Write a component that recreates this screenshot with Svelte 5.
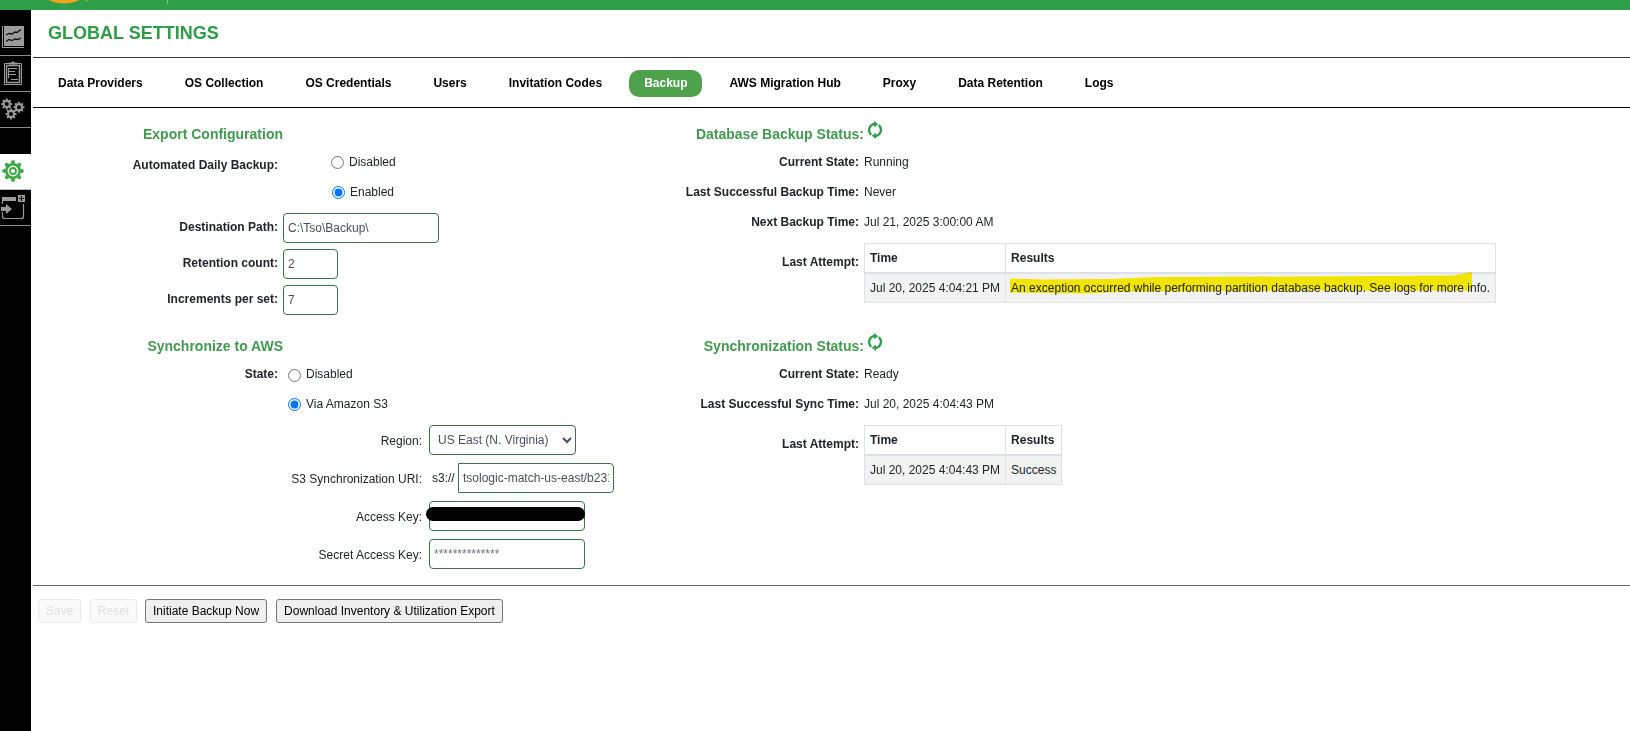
<script lang="ts">
	interface Attempt {
		time: string;
		result: string;
		marked?: boolean;
	}

	interface StatusPanel {
		title: string;
		rows: { label: string; value: string }[];
		attempt: Attempt;
	}

	const tabs: string[] = [
		'Data Providers',
		'OS Collection',
		'OS Credentials',
		'Users',
		'Invitation Codes',
		'Backup',
		'AWS Migration Hub',
		'Proxy',
		'Data Retention',
		'Logs'
	];

	const backupStatus: StatusPanel = {
		title: 'Database Backup Status:',
		rows: [
			{ label: 'Current State:', value: 'Running' },
			{ label: 'Last Successful Backup Time:', value: 'Never' },
			{ label: 'Next Backup Time:', value: 'Jul 21, 2025 3:00:00 AM' }
		],
		attempt: {
			time: 'Jul 20, 2025 4:04:21 PM',
			result:
				'An exception occurred while performing partition database backup. See logs for more info.',
			marked: true
		}
	};

	const syncStatus: StatusPanel = {
		title: 'Synchronization Status:',
		rows: [
			{ label: 'Current State:', value: 'Ready' },
			{ label: 'Last Successful Sync Time:', value: 'Jul 20, 2025 4:04:43 PM' }
		],
		attempt: { time: 'Jul 20, 2025 4:04:43 PM', result: 'Success' }
	};

	let activeTab = $state('Backup');
	let dailyBackup = $state('enabled');
	let syncState = $state('s3');
	let destinationPath = $state('C:\\Tso\\Backup\\');
	let retentionCount = $state('2');
	let incrementsPerSet = $state('7');
	let region = $state('US East (N. Virginia)');
	let syncUri = $state('tsologic-match-us-east/b231');
</script>

<!-- Toothed wheel centred on cx, cy: a ring with evenly rotated teeth -->
{#snippet gear(cx: number, cy: number, r: number, teeth: number, tooth: number, body: number)}
	<g fill="none" stroke="currentColor">
		<circle {cx} {cy} {r} stroke-width={body} />
		{#each Array(teeth) as _, i}
			<path
				d={`M${cx - tooth * 0.8} ${cy - r - body / 2 + 0.4}L${cx - tooth * 0.5} ${cy - r - body / 2 - tooth}H${cx + tooth * 0.5}L${cx + tooth * 0.8} ${cy - r - body / 2 + 0.4}Z`}
				transform={`rotate(${(360 / teeth) * i} ${cx} ${cy})`}
				fill="currentColor"
				stroke="none"
			/>
		{/each}
	</g>
{/snippet}

{#snippet refreshIcon()}
	<svg class="refresh" width="16" height="18" viewBox="0 0 16 18" aria-hidden="true">
		<g fill="none" stroke="#2e9d48" stroke-width="2.3">
			<path d="M4.200 13.800A6.300 6.300 0 0 1 7.500 2.900" />
			<path d="M11.800 4.200A6.300 6.300 0 0 1 8.500 15.100" />
		</g>
		<path d="M7 0L11.300 3.200L7 6.200Z" fill="#2e9d48" />
		<path d="M9 18L4.700 14.800L9 11.800Z" fill="#2e9d48" />
	</svg>
{/snippet}

{#snippet statusPanel(panel: StatusPanel)}
	<section class="panel status">
		<div class="title-row">
			<h2>{panel.title}</h2>
			{@render refreshIcon()}
		</div>
		{#each panel.rows as row}
			<div class="row">
				<span class="label">{row.label}</span>
				<span>{row.value}</span>
			</div>
		{/each}
		<div class="row attempt">
			<span class="label">Last Attempt:</span>
			<table>
				<thead>
					<tr><th>Time</th><th>Results</th></tr>
				</thead>
				<tbody>
					<tr>
						<td>{panel.attempt.time}</td>
						<td class="result">
							{panel.attempt.result}
							{#if panel.attempt.marked}
								<svg class="marker" width="464" height="23" viewBox="0 0 464 23" aria-hidden="true">
									<path
										d="M0 6.5L35 7.5L100 7L145 5L300 4.5L443 3.5L462 0V18.5L300 18.5L120 19.5L74 21.5L0 20.5Z"
										fill="#fef200"
									/>
								</svg>
							{/if}
						</td>
					</tr>
				</tbody>
			</table>
		</div>
	</section>
{/snippet}

<div class="app">
	<header class="topbar">
		<svg width="180" height="10" viewBox="0 0 180 10" aria-hidden="true">
			<ellipse cx="64" cy="-5" rx="19" ry="8.5" fill="#f9a11b" />
			<path d="M85 0h3l-1 1.5z" fill="#c9a52c" />
			<path d="M167.5 0v4" stroke="#7cc48b" />
		</svg>
	</header>

	<div class="body">
		<nav class="sidebar">
			<button class="side first" aria-label="Dashboard">
				<svg width="31" height="44" viewBox="0 0 31 44">
					<path d="M4 16h20v20H4z" fill="#9b9b9b" />
					<path d="M2.5 16v21.500H24" fill="none" stroke="#9b9b9b" />
					<path
						d="M6 25l3-1.500 3 .5 3-2 2 .5 4-3M6 31.500l3-2 3 1 3-1.500 3 .5 3-1.500"
						fill="none"
						stroke="#111"
						stroke-width="1.300"
					/>
				</svg>
			</button>
			<button class="side" aria-label="Reports">
				<svg width="31" height="35" viewBox="0 0 31 35">
					<g fill="none" stroke="#9b9b9b">
						<path d="M4.500 7.500h17v21h-17z" />
						<path d="M6.500 9.500h13v17h-13z" stroke-width="1.500" />
						<path d="M9 12.500h8M9 15.500h6M9 18.500h7M11 23.500h7M8.500 12v10" />
					</g>
					<path d="M9 8.500V6.500h2.500l1.500-1.500 1.500 1.500H17v2z" fill="#9b9b9b" />
				</svg>
			</button>
			<button class="side" aria-label="Services">
				<svg width="31" height="35" viewBox="0 0 31 35" color="#9b9b9b">
					{@render gear(6.7, 12, 3, 8, 1.6, 1.9)}
					{@render gear(19, 15.3, 3, 8, 1.6, 1.9)}
					{@render gear(11, 22, 3, 8, 1.6, 1.9)}
				</svg>
			</button>
			<div class="side-gap"></div>
			<button class="side active" aria-label="Settings">
				<svg width="31" height="35" viewBox="0 0 31 35" color="#3aa845">
					{@render gear(13, 17, 6.7, 8, 2.7, 2.6)}
					<circle cx="13" cy="17" r="3" fill="none" stroke="currentColor" stroke-width="1.800" />
				</svg>
			</button>
			<button class="side" aria-label="Import">
				<svg width="31" height="35" viewBox="0 0 31 35">
					<path d="M2 7h14v4H2zM18 5h7v7h-7z" fill="#9b9b9b" />
					<path d="M21.500 6v5M19 8.500h5" stroke="#111" stroke-width="1.200" />
					<path
						d="M2.500 11v3M2.500 22v4.500q0 2 2 2h17q2 0 2-2V14"
						fill="none"
						stroke="#9b9b9b"
						stroke-width="1.200"
					/>
					<path d="M1 17h5v-3l6 5-6 5v-3H1z" fill="#9b9b9b" />
				</svg>
			</button>
		</nav>

		<main>
			<h1>GLOBAL SETTINGS</h1>

			<div class="tabs" role="tablist">
				{#each tabs as tab}
					<button
						role="tab"
						class="tab"
						class:selected={tab === activeTab}
						aria-selected={tab === activeTab}
						onclick={() => (activeTab = tab)}>{tab}</button
					>
				{/each}
			</div>

			<div class="content">
				<section class="panel">
					<div class="title-row"><h2>Export Configuration</h2></div>
					<div class="row daily">
						<span class="label">Automated Daily Backup:</span>
						<div class="radios">
							<label>
								<input type="radio" value="disabled" bind:group={dailyBackup} />Disabled
							</label>
							<label class="nudge">
								<input type="radio" value="enabled" bind:group={dailyBackup} />Enabled
							</label>
						</div>
					</div>
					<div class="row field">
						<span class="label">Destination Path:</span>
						<input class="box" bind:value={destinationPath} />
					</div>
					<div class="row field">
						<span class="label">Retention count:</span>
						<input class="box short" bind:value={retentionCount} />
					</div>
					<div class="row field">
						<span class="label">Increments per set:</span>
						<input class="box short" bind:value={incrementsPerSet} />
					</div>
				</section>

				{@render statusPanel(backupStatus)}

				<section class="panel">
					<div class="title-row"><h2>Synchronize to AWS</h2></div>
					<div class="row state">
						<span class="label">State:</span>
						<div class="radios">
							<label class="off">
								<input type="radio" value="off" bind:group={syncState} />Disabled
							</label>
							<label>
								<input type="radio" value="s3" bind:group={syncState} />Via Amazon S3
							</label>
						</div>
					</div>
					<div class="s3">
						<div class="s3-row">
							<span class="s3-label">Region:</span>
							<select class="box" bind:value={region}>
								<option>US East (N. Virginia)</option>
							</select>
						</div>
						<div class="s3-row">
							<span class="s3-label">S3 Synchronization URI:</span>
							<span class="scheme">s3://</span>
							<input class="box joined" bind:value={syncUri} />
						</div>
						<div class="s3-row">
							<span class="s3-label">Access Key:</span>
							<div class="covered">
								<input class="box" aria-label="Access Key" />
								<span class="redaction"></span>
							</div>
						</div>
						<div class="s3-row">
							<span class="s3-label">Secret Access Key:</span>
							<input class="box secret" placeholder="**************" />
						</div>
					</div>
				</section>

				{@render statusPanel(syncStatus)}
			</div>

			<footer>
				<button class="action save" disabled>Save</button>
				<button class="action reset" disabled>Reset</button>
				<button class="action">Initiate Backup Now</button>
				<button class="action">Download Inventory &amp; Utilization Export</button>
			</footer>
		</main>
	</div>
</div>

<style>
	:global(body) {
		overflow: hidden;
		background: #fff;
	}

	.app {
		display: flex;
		flex-direction: column;
		height: 731px;
		color: #212529;
		font-family: 'Liberation Sans', Arial, sans-serif;
		font-size: 12px;
		line-height: 18px;
	}

	.app * {
		box-sizing: border-box;
	}

	button,
	input,
	select {
		font: inherit;
	}

	svg {
		display: block;
	}

	.topbar {
		height: 10px;
		background: #2f9e48;
	}

	.body {
		display: flex;
		flex: 1;
		min-height: 0;
	}

	/* Sidebar */
	.sidebar {
		width: 31px;
		margin-right: 2px;
		background: #000;
	}

	.side {
		display: block;
		width: 31px;
		height: 36px;
		padding: 0;
		border: 0;
		border-bottom: 1px solid #8c8c8c;
		background: #000;
	}

	.side.first {
		height: 46px;
	}

	.side.first svg {
		margin-bottom: 1px;
	}

	.side-gap {
		height: 26px;
	}

	.side.active {
		background: #fff;
		border-bottom-color: #bbb;
	}

	/* Header and tabs */
	main {
		flex: 1;
		min-width: 0;
	}

	h1 {
		height: 48px;
		margin: 0;
		padding: 0 15px;
		border-bottom: 1px solid #333;
		color: #2e9d48;
		font-size: 18px;
		line-height: 46px;
	}

	.tabs {
		display: flex;
		align-items: center;
		gap: 12px;
		height: 50px;
		padding: 2px 0 0 10px;
		border-bottom: 1px solid #000;
	}

	.tab {
		height: 27px;
		padding: 0 15px 2px;
		border: 0;
		border-radius: 10px;
		background: none;
		color: #000;
		font-weight: bold;
		white-space: nowrap;
	}

	.tab.selected {
		background: #50a14b;
		color: #fff;
	}

	/* Panels */
	.content {
		display: grid;
		grid-template-columns: 581px 1fr;
		grid-template-rows: 212px 265px;
		border-bottom: 1px solid #666;
	}

	.panel {
		--label-width: 245px;
		padding-top: 11px;
	}

	.title-row {
		display: flex;
		align-items: center;
		height: 28px;
	}

	h2 {
		width: calc(var(--label-width) + 5px);
		margin: 0;
		padding-top: 1px;
		color: #43994f;
		font-size: 14px;
		line-height: 30px;
		text-align: right;
		white-space: nowrap;
	}

	.refresh {
		margin: 0 0 6px 3px;
	}

	.row {
		display: grid;
		grid-template-columns: var(--label-width) max-content;
		column-gap: 5px;
		align-items: center;
		min-height: 30px;
	}

	.label {
		font-weight: bold;
		text-align: right;
		white-space: nowrap;
	}

	.row.daily {
		align-items: start;
		margin-bottom: 6px;
	}

	.daily .label {
		padding-top: 9px;
	}

	.row.state {
		align-items: start;
	}

	.state .label {
		padding-top: 6px;
	}

	.radios label {
		display: flex;
		align-items: center;
		gap: 5px;
		height: 30px;
	}

	.radios input {
		width: 13px;
		height: 13px;
		margin: 1px 0 0;
	}

	.radios .off input {
		margin-top: 3px;
	}

	.daily .radios {
		padding-left: 48px;
	}

	.radios .nudge {
		padding-left: 1px;
	}

	.state .radios {
		padding-left: 5px;
	}

	.row.field {
		margin-bottom: 6px;
	}

	.field .label {
		padding-bottom: 2px;
	}

	.box {
		width: 156px;
		height: 30px;
		padding: 0 4px;
		border: 1px solid #40704b;
		border-radius: 4px;
		background: #fff;
		color: #495057;
		outline: 0;
	}

	.box.short {
		width: 55px;
	}

	select.box {
		width: 147px;
	}

	.s3 {
		display: grid;
		gap: 8px;
		padding-top: 6px;
	}

	.s3-row {
		display: flex;
		align-items: center;
		height: 30px;
	}

	.s3-label {
		width: 389px;
		margin-right: 7px;
		padding-top: 1px;
		text-align: right;
	}

	.scheme {
		width: 29px;
		padding-left: 3px;
	}

	.box.joined {
		border-radius: 0 4px 4px 0;
	}

	.secret::placeholder {
		color: #6c757d;
		opacity: 1;
	}

	.covered {
		position: relative;
		height: 30px;
	}

	.redaction {
		position: absolute;
		top: 6px;
		left: -3px;
		width: 159px;
		height: 14px;
		border-radius: 7px;
		background: #000;
	}

	/* Status */
	.row.attempt {
		align-items: start;
		padding-top: 6px;
	}

	.attempt .label {
		padding-top: 10px;
	}

	table {
		border-collapse: collapse;
		white-space: nowrap;
	}

	th,
	td {
		height: 30px;
		padding: 0 5px;
		border: 1px solid #dee2e6;
		text-align: left;
	}

	th {
		height: 29px;
		border-bottom-width: 2px;
	}

	td {
		background: #f2f2f2;
	}

	.result {
		position: relative;
	}

	.marker {
		position: absolute;
		top: -2px;
		left: 4px;
		mix-blend-mode: multiply;
	}

	/* Actions */
	footer {
		display: flex;
		padding: 13px 5px;
	}

	.action {
		height: 24px;
		margin-right: 9px;
		padding: 0 7px;
		border: 1px solid #767676;
		border-radius: 3px;
		background: #efefef;
		color: #000;
		line-height: 20px;
		white-space: nowrap;
	}

	.action.save {
		width: 43px;
	}

	.action.reset {
		width: 47px;
		margin-right: 8px;
		padding: 0;
	}

	.action:disabled {
		border-color: #eaeaea;
		background: #fafafa;
		color: #dedede;
	}
</style>
